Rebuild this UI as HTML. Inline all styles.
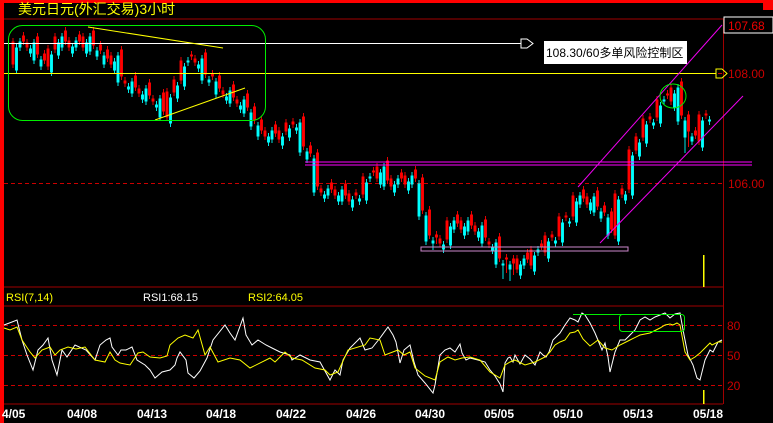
<!DOCTYPE html>
<html><head><meta charset="utf-8"><style>
html,body{margin:0;padding:0;background:#000;width:773px;height:423px;overflow:hidden}
svg{display:block}
text{font-family:"Liberation Sans","Noto Sans CJK SC",sans-serif}
</style></head><body>
<svg width="773" height="423" xmlns="http://www.w3.org/2000/svg" xmlns:xlink="http://www.w3.org/1999/xlink">
<defs>
<path id="R" d="
M12 42h2V64h-2zM13 38V68
M26 43h2V47h-2zM27 39V51
M47 49h2V66h-2zM48 45V70
M54 37h2V49h-2zM55 33V53
M68 41h2V47h-2zM69 37V51
M82 37h2V47h-2zM83 33V51
M110 56h2V64h-2zM111 52V68
M124 81h2V83h-2zM125 77V87
M138 89h2V93h-2zM139 85V97
M152 99h2V101h-2zM153 95V105
M166 92h2V117h-2zM167 88V121
M173 80h2V92h-2zM174 76V96
M180 61h2V80h-2zM181 57V84
M194 59h2V62h-2zM195 55V66
M222 91h2V94h-2zM223 87V98
M236 100h2V103h-2zM237 96V107
M264 131h2V136h-2zM265 127V140
M278 131h2V139h-2zM279 127V143
M285 123h2V131h-2zM286 119V135
M292 122h2V124h-2zM293 118V128
M320 189h2V192h-2zM321 185V196
M334 190h2V195h-2zM335 186V199
M348 194h2V201h-2zM349 190V205
M355 193h2V195h-2zM356 189V199
M362 177h2V194h-2zM363 173V198
M376 167h2V178h-2zM377 163V182
M390 179h2V186h-2zM391 175V190
M404 176h2V184h-2zM405 172V188
M439 239h2V243h-2zM440 235V247
M446 221h2V239h-2zM447 217V243
M460 221h2V229h-2zM461 217V233
M474 226h2V231h-2zM475 222V235
M488 242h2V244h-2zM489 238V248
M516 259h2V269h-2zM517 255V273
M530 250h2V265h-2zM531 246V269
M544 236h2V252h-2zM545 232V256
M551 235h2V237h-2zM552 231V241
M558 217h2V236h-2zM559 213V240
M565 216h2V217h-2zM566 212V221
M572 196h2V216h-2zM573 192V220
M586 197h2V204h-2zM587 193V208
M614 194h2V235h-2zM615 190V239
M621 189h2V194h-2zM622 185V198
M628 150h2V189h-2zM629 146V193
M635 137h2V150h-2zM636 133V154
M642 119h2V137h-2zM643 115V141
M649 117h2V119h-2zM650 113V123
M656 100h2V117h-2zM657 96V121
M670 88h2V101h-2zM671 84V105
M698 115h2V141h-2zM699 111V145
M705 114h2V115h-2zM706 110V119"/>
<path id="C" d="
M19 42h2V47h-2zM20 38V51
M33 43h2V60h-2zM34 39V64
M40 60h2V66h-2zM41 56V70
M61 37h2V47h-2zM62 33V51
M75 41h2V47h-2zM76 37V51
M89 37h2V51h-2zM90 33V55
M96 51h2V56h-2zM97 47V60
M103 56h2V64h-2zM104 52V68
M117 56h2V82h-2zM118 52V86
M131 82h2V93h-2zM132 78V97
M145 89h2V101h-2zM146 85V105
M159 99h2V117h-2zM160 95V121
M187 61h2V62h-2zM188 57V66
M201 59h2V80h-2zM202 55V84
M208 80h2V82h-2zM209 76V86
M215 82h2V94h-2zM216 78V98
M229 91h2V103h-2zM230 87V107
M243 100h2V113h-2zM244 96V117
M250 113h2V126h-2zM251 109V130
M257 126h2V136h-2zM258 122V140
M271 131h2V139h-2zM272 127V143
M299 123h2V152h-2zM300 119V156
M306 152h2V159h-2zM307 148V163
M313 159h2V192h-2zM314 155V196
M327 189h2V195h-2zM328 185V199
M341 190h2V201h-2zM342 186V205
M369 177h2V178h-2zM370 173V182
M383 167h2V186h-2zM384 163V190
M397 179h2V184h-2zM398 175V188
M411 176h2V184h-2zM412 172V188
M418 184h2V216h-2zM419 180V220
M425 216h2V241h-2zM426 212V245
M432 241h2V243h-2zM433 237V250
M453 221h2V229h-2zM454 217V233
M467 221h2V231h-2zM468 217V235
M481 226h2V243h-2zM482 222V247
M495 243h2V264h-2zM496 239V268
M502 264h2V265h-2zM503 260V279
M509 265h2V269h-2zM510 261V281
M523 259h2V265h-2zM524 255V269
M537 250h2V252h-2zM538 246V256
M579 196h2V204h-2zM580 192V208
M593 197h2V212h-2zM594 193V216
M600 212h2V218h-2zM601 208V222
M607 218h2V235h-2zM608 214V239
M663 100h2V101h-2zM664 96V105
M677 88h2V121h-2zM678 84V125
M684 121h2V137h-2zM685 117V153
M691 137h2V141h-2zM692 133V145"/>
</defs>
<rect width="773" height="423" fill="#000"/>
<rect x="0" y="0" width="773" height="3" fill="#f00"/>
<rect x="0" y="0" width="4" height="423" fill="#f00"/>
<rect x="763" y="0" width="10" height="10" fill="#f00"/>
<line x1="4" y1="19" x2="773" y2="19" stroke="#a00000"/>
<line x1="723.5" y1="19" x2="723.5" y2="404" stroke="#a00000"/>
<line x1="4" y1="287" x2="723" y2="287" stroke="#a00000"/>
<line x1="4" y1="306" x2="723" y2="306" stroke="#a00000"/>
<line x1="4" y1="404" x2="723" y2="404" stroke="#a00000"/>
<line x1="4" y1="73.5" x2="723" y2="73.5" stroke="#c00" stroke-dasharray="4,3"/>
<line x1="4" y1="183.5" x2="723" y2="183.5" stroke="#c00" stroke-dasharray="4,3"/>
<line x1="4" y1="325.5" x2="723" y2="325.5" stroke="#c00" stroke-dasharray="4,3"/>
<line x1="4" y1="355.5" x2="723" y2="355.5" stroke="#c00" stroke-dasharray="4,3"/>
<line x1="4" y1="385.5" x2="723" y2="385.5" stroke="#c00" stroke-dasharray="4,3"/>
<text x="18" y="14" fill="#ff0" font-size="14">美元日元(外汇交易)3小时</text>
<rect x="724" y="17" width="49" height="16" fill="#000" stroke="#fff"/>
<text x="728" y="30" fill="#e00" font-size="12">107.68</text>
<text x="728" y="78" fill="#c00" font-size="12">108.00</text>
<text x="728" y="188" fill="#c00" font-size="12">106.00</text>
<text x="727" y="330" fill="#c00" font-size="12">80</text>
<text x="727" y="360" fill="#c00" font-size="12">50</text>
<text x="727" y="390" fill="#c00" font-size="12">20</text>

<use xlink:href="#R" href="#R" x="3.5" y="6" fill="#0ff" stroke="#0ff" stroke-width="0.9"/>
<use xlink:href="#C" href="#C" x="3.5" y="-6" fill="#f00" stroke="#f00" stroke-width="0.9"/>
<use xlink:href="#R" href="#R" fill="#f00" stroke="#f00" stroke-width="0.9"/>
<use xlink:href="#C" href="#C" fill="#0ff" stroke="#0ff" stroke-width="0.9"/>

<line x1="4" y1="73.5" x2="716" y2="73.5" stroke="#ff0"/>
<polygon points="716,69 722,69 727,73.5 722,78 716,78" fill="none" stroke="#ff0"/>
<line x1="4" y1="43.5" x2="521" y2="43.5" stroke="#fff"/>
<polygon points="521,39 527,39 533,43.5 527,48 521,48" fill="none" stroke="#fff"/>
<line x1="305" y1="162" x2="752" y2="162" stroke="#f0f"/>
<line x1="305" y1="165" x2="752" y2="165" stroke="#f0f"/>
<rect x="421" y="247" width="207" height="4" fill="none" stroke="#c8c"/>
<line x1="88" y1="27" x2="223" y2="48" stroke="#ff0"/>
<line x1="155" y1="120" x2="245" y2="88" stroke="#ff0"/>
<rect x="8.5" y="25.5" width="257" height="95" rx="14" fill="none" stroke="#0e0"/>
<line x1="578" y1="187" x2="722" y2="25" stroke="#e0e"/>
<line x1="600" y1="243" x2="743" y2="96" stroke="#e0e"/>
<ellipse cx="673" cy="96" rx="13" ry="12" fill="none" stroke="#0e0"/>
<rect x="544" y="41" width="143" height="23" fill="#fff"/>
<text x="546" y="57" fill="#000" font-size="12">108.30/60多单风险控制区</text>
<rect x="703" y="255" width="1.5" height="32" fill="#ff0"/>
<rect x="703" y="390" width="1.5" height="14" fill="#ff0"/>
<text x="6" y="301" fill="#ff0" font-size="11">RSI(7,14)</text>
<text x="143" y="301" fill="#fff" font-size="11">RSI1:68.15</text>
<text x="248" y="301" fill="#ff0" font-size="11">RSI2:64.05</text>

<polyline fill="none" stroke="#fff" points="4,325 12,322 17,320 22,340 27,355 33,370 38,350 43,345 48,338 52,360 57,375 62,350 67,357 75,345 86,350 95,360 100,345 106,340 110,338 112,347 118,355 121,350 126,350 132,347 137,360 145,365 150,370 155,378 162,372 170,370 175,365 177,358 180,352 186,360 188,373 194,378 200,371 207,358 213,340 225,325 230,333 235,340 243,318 246,335 252,345 258,340 266,345 272,348 280,352 290,355 292,360 300,355 310,360 320,362 330,380 335,370 340,375 343,360 350,348 360,338 365,350 372,348 380,338 388,327 393,335 396,342 400,363 404,350 410,345 414,362 418,375 425,383 433,393 435,385 440,355 445,350 450,348 455,352 460,344 462,353 466,360 470,358 478,360 485,362 490,370 495,376 500,384 503,392 505,363 508,358 510,357 513,362 515,355 520,364 525,355 530,359 535,365 540,352 543,355 546,357 549,352 553,340 560,333 565,325 570,318 575,320 578,322 582,313 585,315 590,323 595,333 600,345 602,350 605,343 608,357 610,372 615,352 620,340 625,340 630,335 635,330 640,320 645,317 650,320 655,317 660,315 665,313 670,318 675,314 680,313 684,335 688,355 693,365 697,378 700,380 705,360 710,350 713,352 718,342 722,340"/>
<polyline fill="none" stroke="#ff0" points="4,328 10,330 17,327 22,340 30,352 35,358 42,350 50,347 55,355 60,350 68,347 76,349 85,347 95,360 105,362 110,352 115,360 120,363 130,365 138,353 143,352 150,357 160,358 167,356 170,345 178,338 185,335 193,338 198,330 205,355 210,347 218,362 230,358 240,360 250,368 270,358 275,362 285,352 292,358 302,360 315,368 325,370 330,375 338,372 348,350 365,345 370,338 380,340 385,355 398,350 404,355 410,352 415,368 425,376 435,380 440,362 448,357 455,360 462,358 470,357 480,360 490,372 500,378 505,365 510,362 515,360 525,365 535,362 545,357 550,352 555,345 560,342 565,340 570,333 575,332 578,330 583,339 590,346 598,340 605,348 612,350 620,345 630,340 640,335 650,333 660,328 665,325 670,324 673,325 677,323 680,325 685,352 690,360 695,357 700,353 705,348 710,343 712,345 718,342 722,342"/>
<line x1="573" y1="314.5" x2="679" y2="314.5" stroke="#0e0"/>
<rect x="619.5" y="314.5" width="65" height="17" rx="3" fill="none" stroke="#0e0"/>
<g fill="#fff" font-size="12" font-weight="bold" font-family="Liberation Mono,monospace">
<text x="2" y="418">4/05</text><text x="67" y="418">04/08</text><text x="137" y="418">04/13</text>
<text x="206" y="418">04/18</text><text x="276" y="418">04/22</text><text x="346" y="418">04/26</text>
<text x="415" y="418">04/30</text><text x="484" y="418">05/05</text><text x="553" y="418">05/10</text>
<text x="623" y="418">05/13</text><text x="693" y="418">05/18</text></g>
</svg>
</body></html>
